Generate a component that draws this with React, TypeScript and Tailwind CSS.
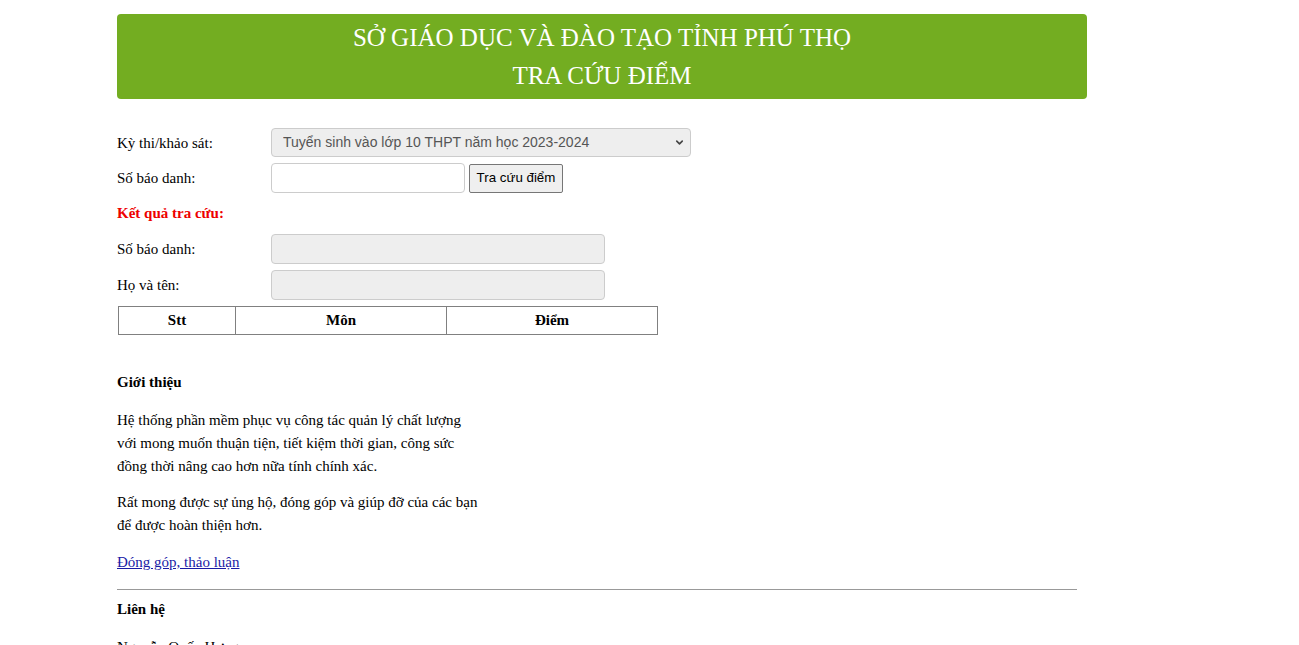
import { ChevronDown } from "lucide-react";

const serif = "font-['Liberation_Serif','Times_New_Roman',serif]";
const sans = "font-['Liberation_Sans',Arial,sans-serif]";

export default function App() {
  return (
    <div className={`min-h-screen bg-white text-black text-[15px] ${serif}`}>
      <div className="ml-[117px] pt-[14px] w-[970px]">
        {/* banner */}
        <div className="bg-[#73ad21] rounded-[4px] text-white text-center text-[25px] leading-[38px] pt-[5px] pb-[4px]">
          <div>SỞ GIÁO DỤC VÀ ĐÀO TẠO TỈNH PHÚ THỌ</div>
          <div>TRA CỨU ĐIỂM</div>
        </div>

        {/* form */}
        <div className="mt-[29px] flex flex-col gap-[6px]">
          <div className="flex items-center h-[29px]">
            <label className="w-[154px] pt-[2px]">Kỳ thi/khảo sát:</label>
            <div className="relative w-[420px] h-[29px]">
              <select
                defaultValue="2023"
                className={`appearance-none w-full h-full rounded-[4px] border border-[#ccc] bg-[#eee] pl-[11px] pr-8 text-[14px] text-[#555] ${sans}`}
              >
                <option value="2023">Tuyển sinh vào lớp 10 THPT năm học 2023-2024</option>
              </select>
              <ChevronDown
                size={11}
                strokeWidth={3.5}
                className="absolute right-[6px] top-[9px] text-[#444] pointer-events-none"
              />
            </div>
          </div>

          <div className="flex items-center h-[30px]">
            <label className="w-[154px]">Số báo danh:</label>
            <input
              type="text"
              className="w-[194px] h-[30px] rounded-[4px] border border-[#ccc] bg-white px-2"
            />
            <button
              className={`ml-[4px] w-[94px] h-[29px] rounded-[2px] border border-[#767676] bg-[#efefef] text-[13.33px] ${sans}`}
            >
              Tra cứu điểm
            </button>
          </div>

          <div className="flex items-center h-[29px]">
            <span className="font-bold text-[#e00]">Kết quả tra cứu:</span>
          </div>

          <div className="flex items-center h-[30px]">
            <label className="w-[154px]">Số báo danh:</label>
            <input
              readOnly
              className="w-[334px] h-[30px] rounded-[4px] border border-[#ccc] bg-[#eee]"
            />
          </div>

          <div className="flex items-center h-[30px]">
            <label className="w-[154px]">Họ và tên:</label>
            <input
              readOnly
              className="w-[334px] h-[30px] rounded-[4px] border border-[#ccc] bg-[#eee]"
            />
          </div>

          <table className="ml-[1px] w-[540px] border-collapse">
            <thead>
              <tr className="h-[28px] font-bold">
                <th className="w-[117px] border border-[#808080]">Stt</th>
                <th className="w-[211px] border border-[#808080]">Môn</th>
                <th className="border border-[#808080]">Điểm</th>
              </tr>
            </thead>
          </table>
        </div>

        {/* intro */}
        <div className="leading-[23px]">
          <p className="mt-[36px] font-bold">Giới thiệu</p>
          <p className="mt-[15px]">
            Hệ thống phần mềm phục vụ công tác quản lý chất lượng
            <br />
            với mong muốn thuận tiện, tiết kiệm thời gian, công sức
            <br />
            đồng thời nâng cao hơn nữa tính chính xác.
          </p>
          <p className="mt-[13px]">
            Rất mong được sự ủng hộ, đóng góp và giúp đỡ của các bạn
            <br />
            để được hoàn thiện hơn.
          </p>
          <p className="mt-[14px]">
            <a href="#" className="text-[#1a1aa6] underline">
              Đóng góp, thảo luận
            </a>
          </p>
          <hr className="mt-[15px] w-[960px] border-t border-[#999]" />
          <p className="mt-[8px] font-bold">Liên hệ</p>
          <p className="mt-[15px] pb-10">Nguyễn Quốc Hưng</p>
        </div>
      </div>
    </div>
  );
}
